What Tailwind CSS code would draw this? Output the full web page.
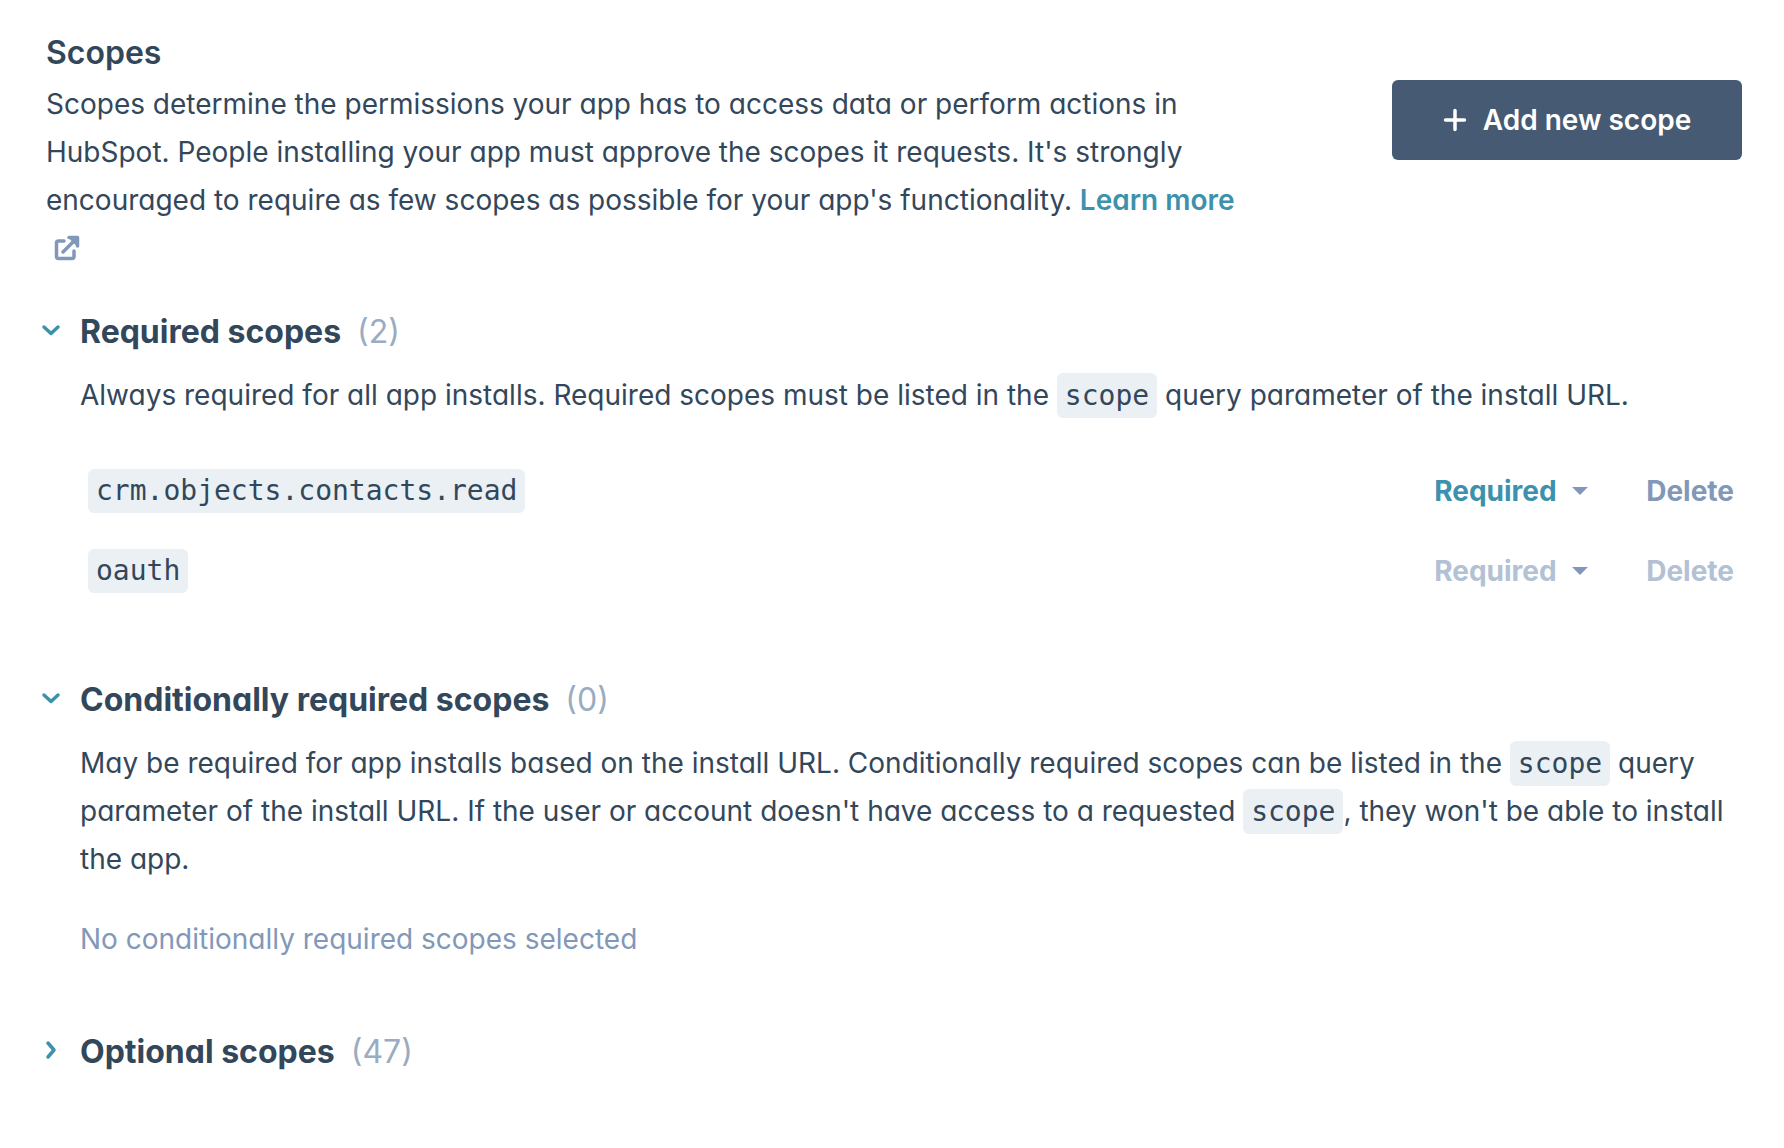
<!DOCTYPE html>
<html lang="en">
<head>
  <meta charset="UTF-8">
  <meta name="viewport" content="width=device-width, initial-scale=1.0">
  <title>Scopes</title>
  <script src="https://cdn.jsdelivr.net/npm/@tailwindcss/browser@4"></script>
</head>
<body class="bg-white font-[Inter,sans-serif] [font-feature-settings:'cv11'] text-[28px] leading-[48px] text-[#33475b]">
  <main class="pt-7 pb-20 pl-10 pr-[42px]">

    <!-- Header -->
    <header class="flex items-start justify-between pl-[6px]">
      <div class="max-w-[1240px]">
        <h1 class="mb-[2px] text-[32px] leading-[50px] font-semibold">Scopes</h1>
        <p>
          Scopes determine the permissions your app has to access data or perform actions in<br>
          HubSpot. People installing your app must approve the scopes it requests. It's strongly<br>
          encouraged to require as few scopes as possible for your app's functionality.
          <a href="#" class="font-semibold text-[#3e91ac]">Learn more<br>
            <svg class="ml-2 inline-block size-7 align-[-4px]" viewBox="0 0 28 28" fill="none" stroke="#8298b8" stroke-width="3.5" stroke-linecap="round" stroke-linejoin="round" role="img" aria-label="Opens in a new window">
              <path d="M10 7H4.500Q2.500 7 2.500 9V22.500Q2.500 24.500 4.500 24.500H18Q20 24.500 20 22.500V17"/>
              <path d="M9 18L21 6"/>
              <path d="M14 3H24V13L20 9.500L17.500 7Z" fill="#8298b8" stroke="none"/>
              <path d="M15 3.500H23.500V12"/>
            </svg></a>
        </p>
      </div>
      <button type="button" class="mt-[52px] flex h-20 w-[350px] shrink-0 items-center justify-center gap-4 rounded-md bg-[#465a73] font-semibold text-white">
        <svg class="size-6" viewBox="0 0 24 24" fill="none" stroke="currentColor" stroke-width="3.5" stroke-linecap="round"><path d="M12 2.500V21.500M2.500 12H21.500"/></svg>
        Add new scope
      </button>
    </header>

    <!-- Required scopes -->
    <section class="mt-8">
      <h2 class="text-[32px] leading-[56px]">
        <button type="button" aria-expanded="true" class="flex items-center gap-4">
          <svg class="-mt-1 size-6" viewBox="0 0 24 24" fill="none" stroke="#3e91ac" stroke-width="3.500" stroke-linecap="round" stroke-linejoin="round"><path d="M4 9L11 15.500L18 9"/></svg>
          <span class="font-bold">Required scopes</span>
          <span class="text-[#99acc2]">(2)</span>
        </button>
      </h2>
      <div class="pl-10">
        <p class="mt-[11px]">Always required for all app installs. Required scopes must be listed in the <code class="rounded-md bg-[#eaf0f4] px-2 py-[6px] font-['DejaVu_Sans_Mono',monospace] leading-none">scope</code> query parameter of the install URL.</p>
        <ul class="mt-8 pl-2">
          <li class="flex h-20 items-center">
            <code class="mr-auto rounded-md bg-[#eaf0f4] px-2 font-['DejaVu_Sans_Mono',monospace] leading-[44px]">crm.objects.contacts.read</code>
            <div class="relative mr-[58px] font-bold">
              <select aria-label="Scope type for crm.objects.contacts.read" class="block w-[154px] appearance-none text-[#3e91ac]">
                <option>Required</option>
                <option>Conditionally required</option>
                <option>Optional</option>
              </select>
              <svg class="pointer-events-none absolute top-5 right-0 h-2 w-4" viewBox="0 0 16 8" fill="#8298b8"><path d="M0 0H16L8 8Z"/></svg>
            </div>
            <button type="button" class="mr-2 font-bold text-[#8298b8]">Delete</button>
          </li>
          <li class="flex h-20 items-center">
            <code class="mr-auto rounded-md bg-[#eaf0f4] px-2 font-['DejaVu_Sans_Mono',monospace] leading-[44px]">oauth</code>
            <div class="relative mr-[58px] font-bold">
              <select disabled aria-label="Scope type for oauth" class="block w-[154px] appearance-none text-[#b3c1d4] opacity-100">
                <option>Required</option>
              </select>
              <svg class="pointer-events-none absolute top-5 right-0 h-2 w-4" viewBox="0 0 16 8" fill="#8298b8"><path d="M0 0H16L8 8Z"/></svg>
            </div>
            <button type="button" disabled class="mr-2 font-bold text-[#b3c1d4]">Delete</button>
          </li>
        </ul>
      </div>
    </section>

    <!-- Conditionally required scopes -->
    <section class="mt-[61px]">
      <h2 class="text-[32px] leading-[56px]">
        <button type="button" aria-expanded="true" class="flex items-center gap-4">
          <svg class="-mt-1 size-6" viewBox="0 0 24 24" fill="none" stroke="#3e91ac" stroke-width="3.500" stroke-linecap="round" stroke-linejoin="round"><path d="M4 9L11 15.500L18 9"/></svg>
          <span class="font-bold">Conditionally required scopes</span>
          <span class="text-[#99acc2]">(0)</span>
        </button>
      </h2>
      <div class="pl-10">
        <p class="mt-[11px]">
          May be required for app installs based on the install URL. Conditionally required scopes can be listed in the <code class="rounded-md bg-[#eaf0f4] px-2 py-[6px] font-['DejaVu_Sans_Mono',monospace] leading-none">scope</code> query<br>
          parameter of the install URL. If the user or account doesn't have access to a requested <code class="rounded-md bg-[#eaf0f4] px-2 py-[6px] font-['DejaVu_Sans_Mono',monospace] leading-none">scope</code>, they won't be able to install<br>
          the app.
        </p>
        <p class="mt-8 text-[#8298b8]">No conditionally required scopes selected</p>
      </div>
    </section>

    <!-- Optional scopes -->
    <section class="mt-[61px]">
      <h2 class="text-[32px] leading-[56px]">
        <button type="button" aria-expanded="false" class="flex items-center gap-4">
          <svg class="-mt-1 size-6" viewBox="0 0 24 24" fill="none" stroke="#3e91ac" stroke-width="3.500" stroke-linecap="round" stroke-linejoin="round"><path d="M8 5L14 12L8 19"/></svg>
          <span class="font-bold">Optional scopes</span>
          <span class="text-[#99acc2]">(47)</span>
        </button>
      </h2>
    </section>

  </main>
</body>
</html>
